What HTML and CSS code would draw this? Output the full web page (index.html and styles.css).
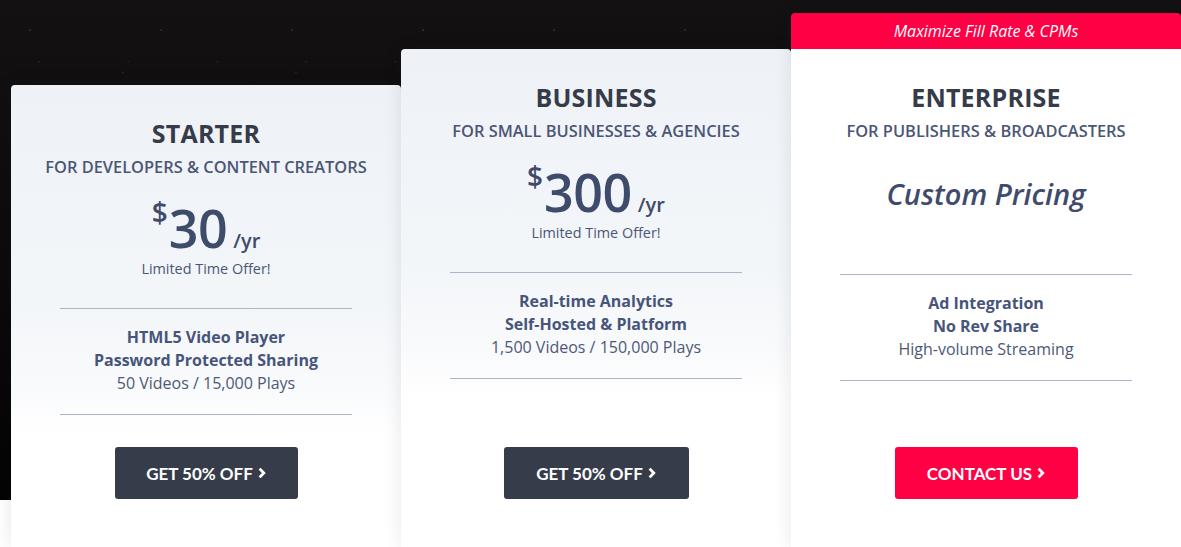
FILE: index.html
```html
<!DOCTYPE html>
<html lang="en">
<head>
<meta charset="utf-8">
<title>Pricing</title>
<link rel="stylesheet" href="styles.css">
</head>
<body>
<section class="pricing">
  <div class="plans">
    <article class="plan plan-starter">
      <div class="plan-body">
        <h2 class="plan-name">STARTER</h2>
        <p class="plan-for">FOR DEVELOPERS &amp; CONTENT CREATORS</p>
        <div class="price-block">
          <div class="price"><span class="cur">$</span><span class="amount">30</span><span class="per">/yr</span></div>
          <div class="offer">Limited Time Offer!</div>
        </div>
        <ul class="features">
          <li class="strong">HTML5 Video Player</li>
          <li class="strong">Password Protected Sharing</li>
          <li>50 Videos / 15,000 Plays</li>
        </ul>
        <a class="btn btn-dark" href="#">GET 50% OFF <svg class="chev" viewBox="0 0 8 12" width="8" height="12"><path d="M1.6 1.6 L5.8 6 L1.6 10.4" fill="none" stroke="currentColor" stroke-width="2.8"/></svg></a>
      </div>
    </article>
    <article class="plan plan-business">
      <div class="plan-body">
        <h2 class="plan-name">BUSINESS</h2>
        <p class="plan-for">FOR SMALL BUSINESSES &amp; AGENCIES</p>
        <div class="price-block">
          <div class="price"><span class="cur">$</span><span class="amount">300</span><span class="per">/yr</span></div>
          <div class="offer">Limited Time Offer!</div>
        </div>
        <ul class="features">
          <li class="strong">Real-time Analytics</li>
          <li class="strong">Self-Hosted &amp; Platform</li>
          <li>1,500 Videos / 150,000 Plays</li>
        </ul>
        <a class="btn btn-dark" href="#">GET 50% OFF <svg class="chev" viewBox="0 0 8 12" width="8" height="12"><path d="M1.6 1.6 L5.8 6 L1.6 10.4" fill="none" stroke="currentColor" stroke-width="2.8"/></svg></a>
      </div>
    </article>
    <article class="plan plan-enterprise">
      <div class="plan-banner">Maximize Fill Rate &amp; CPMs</div>
      <div class="plan-body">
        <h2 class="plan-name">ENTERPRISE</h2>
        <p class="plan-for">FOR PUBLISHERS &amp; BROADCASTERS</p>
        <div class="price-block price-custom">
          <div class="custom">Custom Pricing</div>
        </div>
        <ul class="features">
          <li class="strong">Ad Integration</li>
          <li class="strong">No Rev Share</li>
          <li>High-volume Streaming</li>
        </ul>
        <a class="btn btn-red" href="#">CONTACT US <svg class="chev" viewBox="0 0 8 12" width="8" height="12"><path d="M1.6 1.6 L5.8 6 L1.6 10.4" fill="none" stroke="currentColor" stroke-width="2.8"/></svg></a>
      </div>
    </article>
  </div>
</section>
</body>
</html>
```

FILE: styles.css
```css
* { box-sizing: border-box; }

html, body {
  margin: 0;
  padding: 0;
  background: #ffffff;
  font-family: "Open Sans", "Noto Sans", sans-serif;
}

.pricing {
  padding: 13px 0 0 11px;
  background-color: #ffffff;
  background-image:
    radial-gradient(circle at 23% 31%, rgba(255,255,255,0.12) 0.6px, transparent 1.2px),
    radial-gradient(circle at 71% 64%, rgba(255,255,255,0.09) 0.6px, transparent 1.2px),
    radial-gradient(circle at 44% 87%, rgba(255,255,255,0.08) 0.5px, transparent 1px),
    linear-gradient(#141112, #0b090a 60%, #050304);
  background-size: 131px 97px, 173px 113px, 89px 71px, 100% 500px;
  background-repeat: repeat, repeat, repeat, no-repeat;
}

.plans {
  display: flex;
  align-items: stretch;
}

.plan {
  width: 390px;
  display: flex;
  flex-direction: column;
  position: relative;
  border-radius: 4px 4px 0 0;
  box-shadow: 0 0 18px rgba(20, 30, 50, 0.10);
}

.plan-starter { margin-top: 72px; z-index: 1; }
.plan-business { margin-top: 36px; z-index: 2; }
.plan-enterprise { z-index: 3; }

.plan-body {
  flex: 1;
  display: flex;
  flex-direction: column;
  align-items: center;
  padding: 33px 0 48px;
  border-radius: 4px 4px 0 0;
  background: linear-gradient(to bottom, #eef2f7 0px, #f3f6f9 220px, #f9fafc 300px, #ffffff 350px);
}

.plan-enterprise .plan-body {
  background: #ffffff;
  border-radius: 0;
}

.plan-banner {
  height: 36px;
  background: #ff0044;
  color: #ffffff;
  font-style: italic;
  font-size: 16px;
  line-height: 36px;
  text-align: center;
  border-radius: 4px 4px 0 0;
}

.plan-name {
  margin: 0;
  font-size: 25px;
  line-height: 30px;
  font-weight: 700;
  color: #353b48;
  letter-spacing: 0.2px;
}

.plan-for {
  margin: 8px 0 0;
  font-size: 16.4px;
  line-height: 22px;
  font-weight: 600;
  color: #4b5675;
  white-space: nowrap;
}

.price-block {
  margin-top: 26px;
  height: 74px;
  display: flex;
  flex-direction: column;
  align-items: center;
}

.price {
  display: flex;
  align-items: baseline;
  height: 52px;
  color: #3f4b6b;
}

.cur {
  font-size: 28px;
  font-weight: 600;
  line-height: 28px;
  align-self: flex-start;
  margin-top: -6px;
  margin-right: 1px;
}

.amount {
  font-size: 52px;
  line-height: 48px;
  font-weight: 600;
  letter-spacing: -0.5px;
}

.per {
  font-size: 20px;
  font-weight: 600;
  margin-left: 6px;
}

.offer {
  margin-top: 3px;
  font-size: 14.4px;
  line-height: 19px;
  color: #4b5675;
}

.price-custom {
  height: 76px;
}

.custom {
  padding-top: 6px;
  font-size: 29px;
  line-height: 40px;
  font-style: italic;
  font-weight: 600;
  color: #3f4b6b;
}

.features {
  list-style: none;
  margin: 30px 0 32px;
  padding: 17px 0 19px;
  width: 292px;
  border-top: 1px solid #adb4c8;
  border-bottom: 1px solid #adb4c8;
  text-align: center;
  font-size: 16px;
  line-height: 23px;
  color: #4d5878;
}

.features .strong {
  font-weight: 700;
  color: #47557a;
}

.btn {
  margin-top: auto;
  display: flex;
  align-items: center;
  justify-content: center;
  gap: 5px;
  height: 52px;
  border-radius: 3px;
  font-family: "Lato", "Open Sans", sans-serif;
  font-weight: 700;
  font-size: 17px;
  color: #ffffff;
  text-decoration: none;
}

.plan-starter .btn { width: 183px; }
.plan-business .btn { width: 185px; }
.plan-enterprise .btn { width: 183px; }

.btn-dark { background: #363c4a; }
.btn-red { background: #ff0044; }

.chev { display: block; margin-top: -1px; }
```
